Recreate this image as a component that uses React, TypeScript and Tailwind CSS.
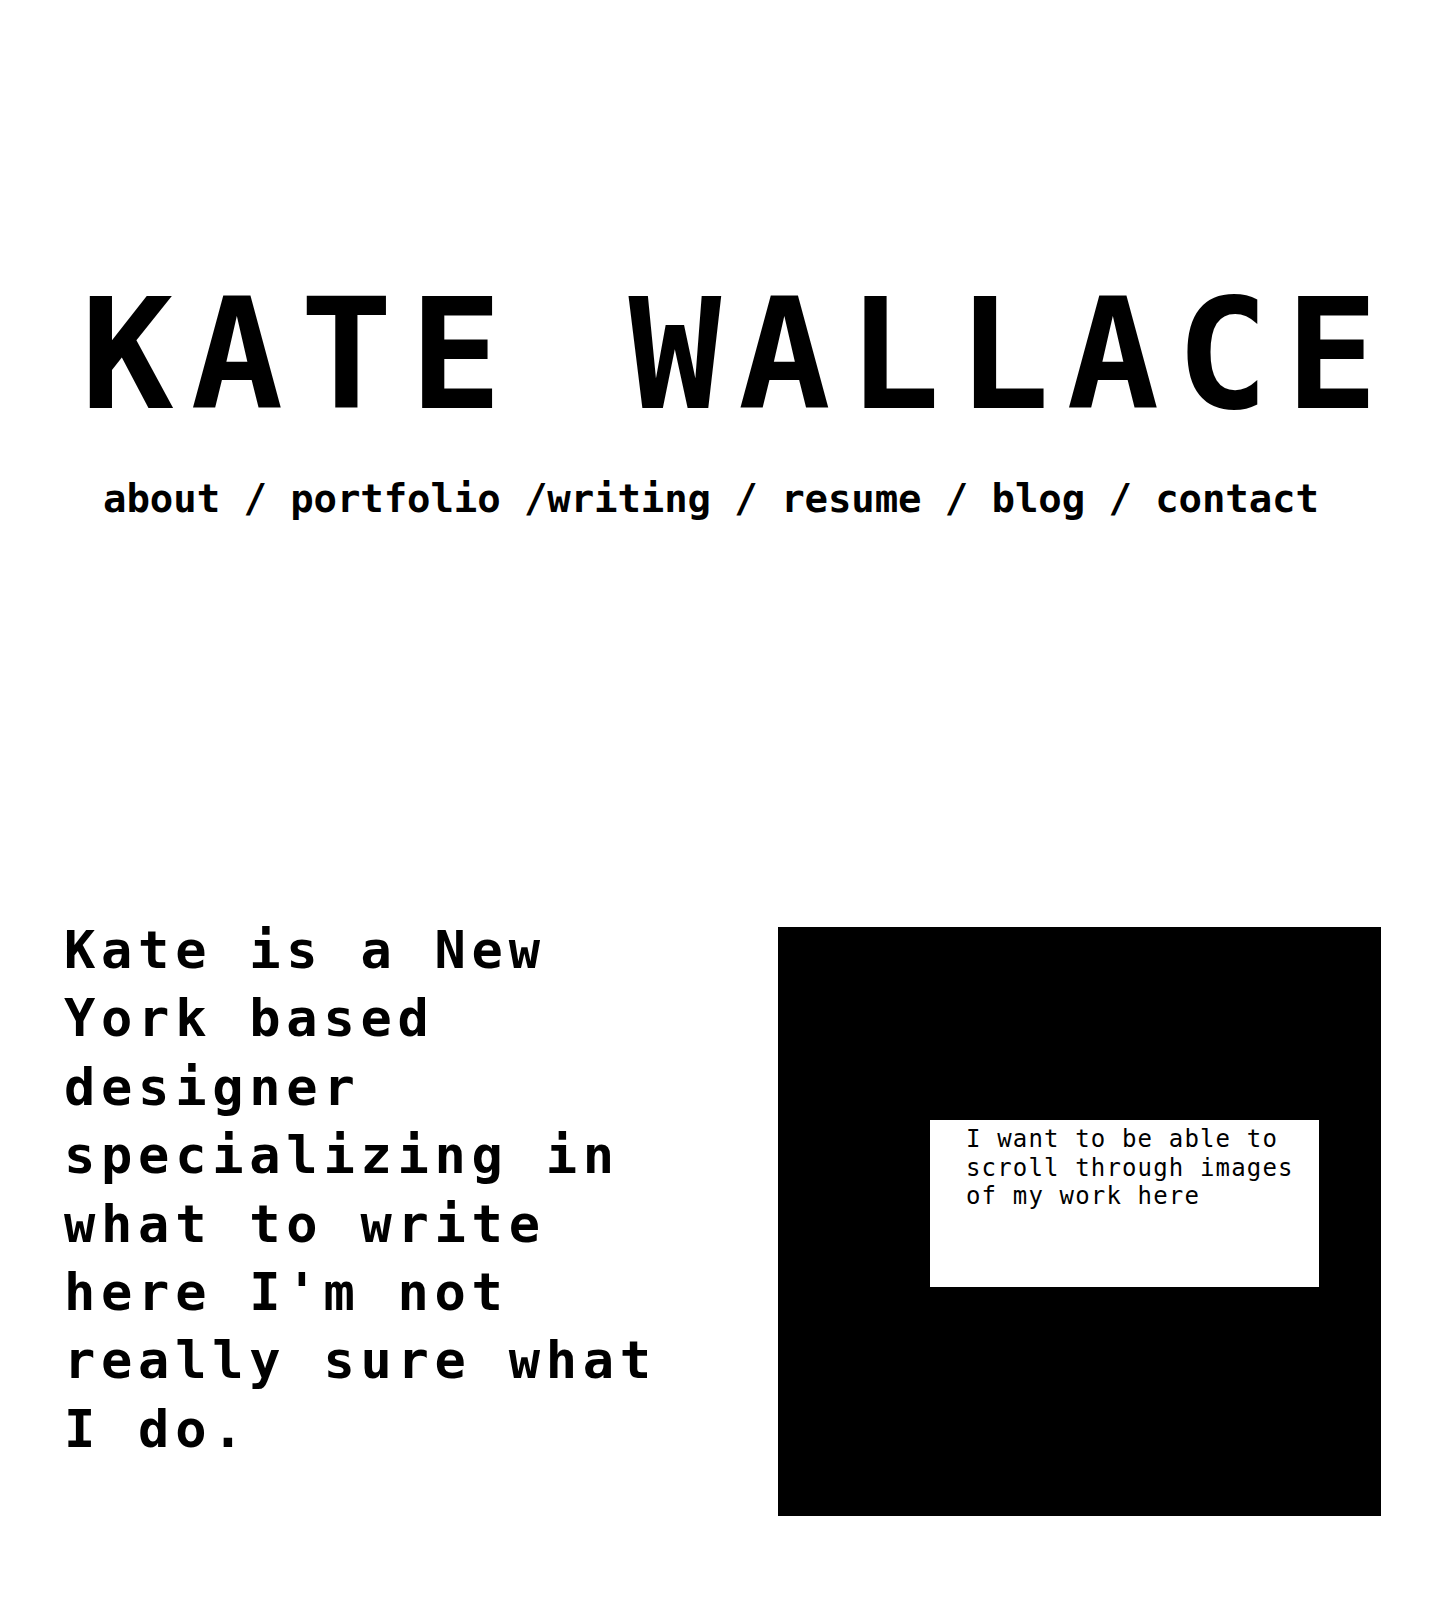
import React from "react"

const mono = "font-['DejaVu_Sans_Mono','Liberation_Mono',monospace]"

function Nav() {
  return (
    <nav className={`mt-[47px] pr-[18px] text-center text-[39px] leading-none font-bold tracking-[-0.1px] ${mono}`}>
      <span>about / portfolio /writing / resume / blog / contact</span>
    </nav>
  )
}

function Gallery() {
  return (
    <div className="mt-[11px] mr-[59px] h-[589px] w-[603px] shrink-0 bg-black pl-[152px] pt-[193px]">
      <div className={`h-[167px] w-[389px] bg-white pl-[36px] pt-[5px] text-[24px] leading-[28.6px] tracking-[1.15px] text-black ${mono}`}>
        I want to be able to scroll through images of my work here
      </div>
    </div>
  )
}

export default function App() {
  return (
    <div className="min-h-[1600px] bg-white text-black">
      <header className="pt-[278px]">
        <h1 className={`pl-[36px] text-center text-[154px] leading-none font-bold tracking-[16.8px] ${mono}`}>
          KATE WALLACE
        </h1>
        <Nav />
      </header>
      <section className="mt-[398px] flex items-start justify-between pl-[64px]">
        <p className={`w-[640px] text-[52px] leading-[68.4px] font-bold tracking-[5.75px] ${mono}`}>
          Kate is a New York based designer specializing in what to write here I'm not really sure what I do.
        </p>
        <Gallery />
      </section>
    </div>
  )
}
